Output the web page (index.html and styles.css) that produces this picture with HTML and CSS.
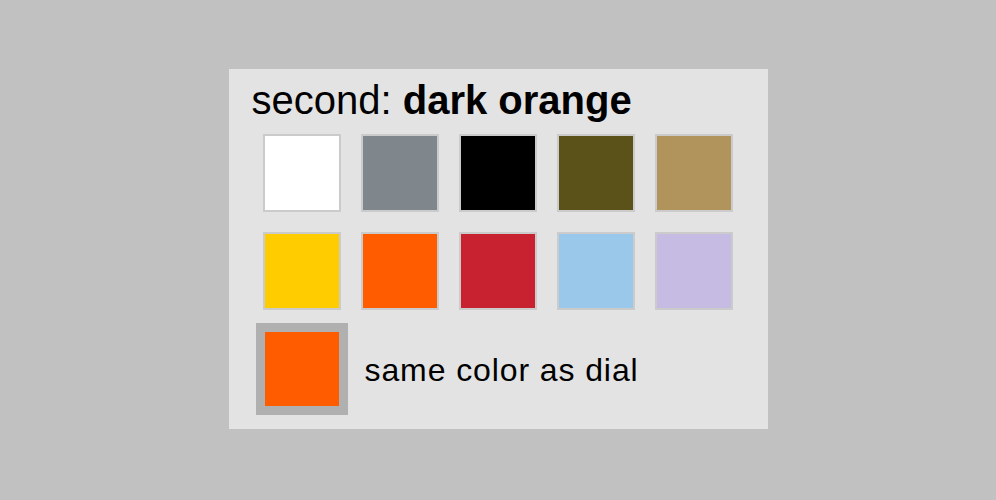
FILE: index.html
```html
<!DOCTYPE html>
<html lang="en">
<head>
    <meta charset="UTF-8">
    <title>Second hand colour</title>
    <link rel="stylesheet" href="styles.css">
</head>
<body>

    <div class="picker">
        <h2 class="picker-title">second: <b>dark orange</b></h2>

        <div class="swatches">
            <div class="swatch" style="background-color: #ffffff"></div>
            <div class="swatch" style="background-color: #7f868c"></div>
            <div class="swatch" style="background-color: #000000"></div>
            <div class="swatch" style="background-color: #5b521a"></div>
            <div class="swatch" style="background-color: #b0945b"></div>
            <div class="swatch" style="background-color: #ffcc00"></div>
            <div class="swatch" style="background-color: #ff5c00"></div>
            <div class="swatch" style="background-color: #c82130"></div>
            <div class="swatch" style="background-color: #99c8ea"></div>
            <div class="swatch" style="background-color: #c6bbe2"></div>
        </div>

        <div class="dial-row">
            <div class="swatch swatch-selected" style="background-color: #ff5c00"></div>
            <span class="dial-label">same color as dial</span>
        </div>
    </div>

</body>
</html>
```

FILE: styles.css
```css
body {
    margin: 0;
    height: 100vh;
    background-color: #c1c1c1;
    font-family: "Liberation Sans", Arial, sans-serif;
    color: #000;
    display: flex;
    align-items: center;
    justify-content: center;
}
.picker {
    width: 539px;
    height: 360px;
    box-sizing: border-box;
    margin-top: -2px;
    padding: 9px 0 0 23px;
    background-color: #e3e3e3;
}
.picker-title {
    margin: 0;
    font-size: 40px;
    font-weight: normal;
    line-height: 45px;
}
.picker-title b {
    font-weight: bold;
}
.swatches {
    display: grid;
    grid-template-columns: repeat(5, 78px);
    gap: 20px;
    margin: 11px 0 0 11px;
}
.swatch {
    width: 74px;
    height: 74px;
    border: 2px solid #cbcbcb;
}
.dial-row {
    display: flex;
    align-items: center;
    gap: 17px;
    margin: 13px 0 0 4px;
}
.swatch-selected {
    border: 9px solid #b0b0b0;
}
.dial-label {
    font-size: 32px;
    letter-spacing: 0.9px;
    margin-top: 2px;
}
```
